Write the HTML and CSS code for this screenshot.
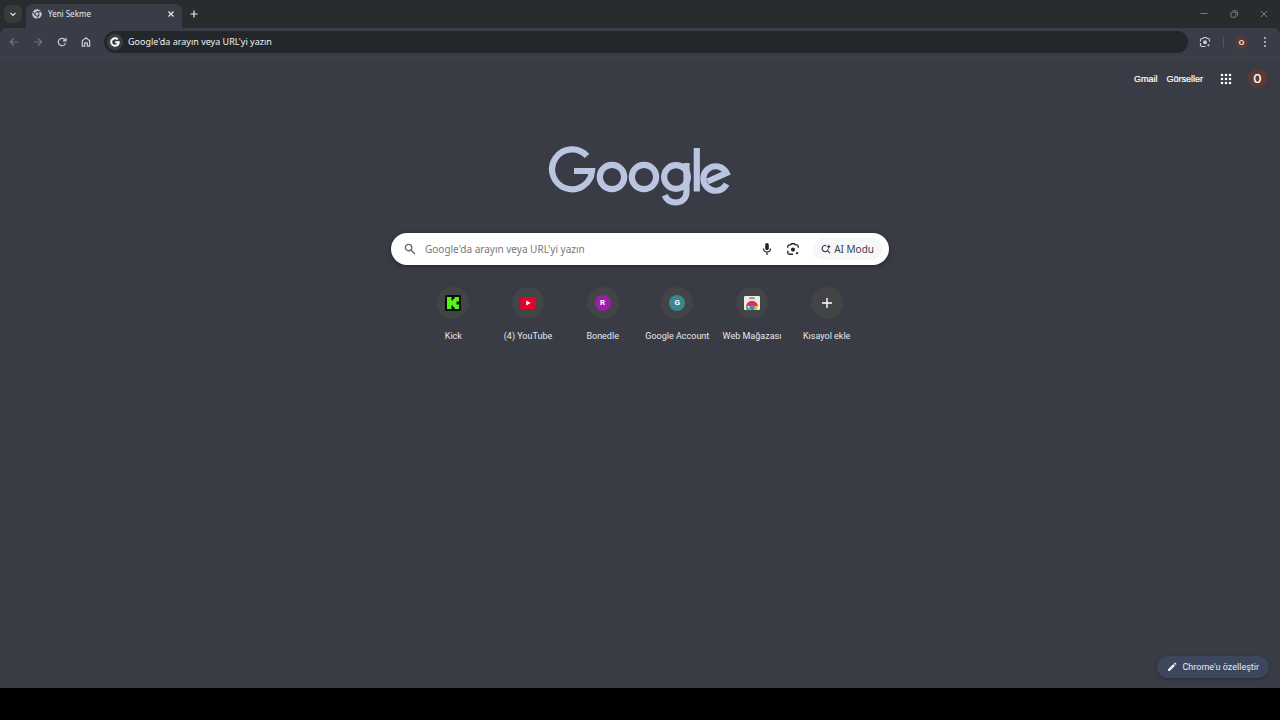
FILE: index.html
```html
<!DOCTYPE html>
<html lang="tr">
<head>
<meta charset="utf-8">
<title>Yeni Sekme</title>
<link rel="stylesheet" href="styles.css">
</head>
<body>
<header class="tabstrip">
  <button class="tab-search" aria-label="Sekmelerde ara"><svg width="8" height="8" viewBox="0 0 8 8"><path class="line" d="M1.5 2.8 4 5.3 6.5 2.8"/></svg></button>
  <div class="tab">
    <svg width="10" height="10" viewBox="0 0 20 20"><circle cx="10" cy="10" r="9.5" fill="#c5cad8"/><circle cx="10" cy="10" r="4.2" fill="#c5cad8" stroke="#3a3d47" stroke-width="2"/><path d="M10 5.3h8.5M6 12.5 1.8 5.2M14 12.5 9.8 19.5" stroke="#3a3d47" stroke-width="2"/></svg>
    <span class="tab-title">Yeni Sekme</span>
    <button class="plain" aria-label="Sekmeyi kapat"><svg width="8" height="8" viewBox="0 0 8 8"><path class="line" d="m1.5 1.5 5 5m0-5-5 5"/></svg></button>
  </div>
  <button class="plain new-tab" aria-label="Yeni sekme"><svg width="10" height="10" viewBox="0 0 10 10"><path class="line" d="M5 1.5v7M1.5 5h7"/></svg></button>
  <div class="window-controls">
    <button class="plain" aria-label="Küçült"><svg width="10" height="10" viewBox="0 0 10 10"><path class="thin" d="M1.5 4.5h7"/></svg></button>
    <button class="plain" aria-label="Geri yükle"><svg width="10" height="10" viewBox="0 0 10 10"><rect class="thin" x="2" y="3.2" width="5" height="5" rx="1"/><path class="thin" d="M3.7 1.7h3.2q1.6 0 1.6 1.6v3.2"/></svg></button>
    <button class="plain" aria-label="Kapat"><svg width="10" height="10" viewBox="0 0 10 10"><path class="thin" d="m2 2 6 6m0-6-6 6"/></svg></button>
  </div>
</header>
<nav class="toolbar" aria-label="Araç çubuğu">
  <button class="plain nav dim" aria-label="Geri"><svg width="12" height="12" viewBox="0 0 12 12"><path class="line" d="M10 6H2.5m3.3-3.5L2.3 6l3.5 3.5"/></svg></button>
  <button class="plain nav dim" aria-label="İleri"><svg width="12" height="12" viewBox="0 0 12 12"><path class="line" d="M2 6h7.5M6.2 2.5 9.7 6 6.2 9.5"/></svg></button>
  <button class="plain nav" aria-label="Yenile"><svg width="12" height="12" viewBox="0 0 12 12"><path class="line" d="M9.5 7.2A3.7 3.7 0 1 1 8.8 3.6L10 4.8M10 1.8v3.1H7"/></svg></button>
  <button class="plain nav" aria-label="Ana sayfa"><svg width="12" height="12" viewBox="0 0 12 12"><path class="line" d="M2.3 10.2V4.8L6 1.7l3.7 3.1v5.4H7.3V6.9H4.7v3.3z"/></svg></button>
  <label class="omnibox">
    <span class="g-badge"><svg width="10" height="10" viewBox="0 0 20 20"><path d="M15.5 4.7A7.6 7.6 0 1 0 17.6 10.6H10.5" fill="none" stroke="#fff" stroke-width="3.8"/></svg></span>
    <input type="text" aria-label="Adres ve arama çubuğu" placeholder="Google'da arayın veya URL'yi yazın">
  </label>
  <button class="plain lens-small" aria-label="Google Lens"><svg width="12" height="12" viewBox="0 0 24 24"><path class="lens" d="M3 11V8q0-3 3-3h2l1.500-2h5L16 5h2q3 0 3 3v3M3 14v4q0 3 3 3h7"/><circle cx="12" cy="12.500" r="3.800" fill="currentColor"/><circle cx="19" cy="18.500" r="2.200" fill="currentColor"/></svg></button>
  <span class="divider"></span>
  <button class="avatar small" aria-label="Profil">O</button>
  <button class="plain more" aria-label="Menü"><svg width="10" height="12" viewBox="0 0 10 12" fill="currentColor"><circle cx="5" cy="2" r="1"/><circle cx="5" cy="6" r="1"/><circle cx="5" cy="10" r="1"/></svg></button>
</nav>
<main class="page">
  <div class="account">
    <a href="#">Gmail</a>
    <a href="#">Görseller</a>
    <button class="plain apps" aria-label="Google uygulamaları"><svg width="12" height="12" viewBox="0 0 12 12" fill="currentColor"><circle cx="2" cy="2" r="1.300"/><circle cx="6" cy="2" r="1.300"/><circle cx="10" cy="2" r="1.300"/><circle cx="2" cy="6" r="1.300"/><circle cx="6" cy="6" r="1.300"/><circle cx="10" cy="6" r="1.300"/><circle cx="2" cy="10" r="1.300"/><circle cx="6" cy="10" r="1.300"/><circle cx="10" cy="10" r="1.300"/></svg></button>
    <button class="avatar" aria-label="Google Hesabı">O</button>
  </div>
  <svg class="logo" role="img" aria-label="Google" width="184" height="62" viewBox="0 0 184 62" fill="none" stroke="#bac5e2" stroke-width="6.2"><path d="M39 10A20 20 0 1 0 44 25H26"/><circle cx="64" cy="31" r="12.2"/><circle cx="96" cy="31" r="12.2"/><circle cx="128" cy="31" r="11.9"/><path d="M138.500 17v28.500c0 7-4.600 11-10.900 11-5.200 0-9-2.600-10.900-7.200"/><path d="M148.800 2v43.500"/><path d="M159.500 35.500 178.500 27A12.200 12.200 0 1 0 178.500 38"/></svg>
  <form class="search">
    <svg width="12" height="12" viewBox="0 0 12 12" class="glass"><circle cx="4.6" cy="4.6" r="3.2"/><path d="m7 7 3.9 3.9"/></svg>
    <input type="text" aria-label="Arama" placeholder="Google'da arayın veya URL'yi yazın">
    <button type="button" class="plain mic" aria-label="Sesle arama"><svg width="14" height="14" viewBox="0 0 14 14"><rect x="5.2" y="1" width="3.600" height="7.200" rx="1.800" fill="currentColor"/><path class="line" d="M3.500 6.500q0 3.500 3.500 3.500t3.500-3.500M7 10v3"/></svg></button>
    <button type="button" class="plain lens-big" aria-label="Görselle arama"><svg width="14" height="14" viewBox="0 0 24 24"><path class="lens" d="M3 10V8q0-3 3-3h2l1.500-2h5L16 5h2q3 0 3 3v2M3 15v3q0 3 3 3h6"/><circle cx="12" cy="13" r="3.500" fill="currentColor"/><circle cx="19" cy="19" r="2" fill="currentColor"/></svg></button>
    <button type="button" class="ai"><svg width="10" height="10" viewBox="0 0 10 10"><path class="line" d="M5.200 1.600A3.100 3.100 0 1 0 7.200 5.500M6.500 6.700 9 9.200"/><path d="M7.700.2 8.400 2l1.600.7-1.600.7-.7 1.800L7 3.400l-1.600-.7L7 2z" fill="currentColor"/></svg>AI Modu</button>
  </form>
  <div class="shortcuts">
    <a href="#"><span class="tile"><svg width="16" height="16" viewBox="0 0 16 16"><rect width="16" height="16" rx="1.500" fill="#071006"/><g fill="#54f51c"><rect x="2" y="2" width="4.500" height="12"/><rect x="6" y="5.500" width="3" height="5"/><rect x="8" y="4" width="3.500" height="8"/><rect x="9.500" y="2" width="4.500" height="4.500"/><rect x="9.500" y="9.500" width="4.500" height="4.500"/></g></svg></span>Kick</a>
    <a href="#"><span class="tile"><svg width="16" height="12" viewBox="0 0 16 12"><rect width="16" height="12" rx="2.500" fill="#e6002d"/><path fill="#fff" d="m6.200 3.500 4.500 2.500-4.500 2.500z"/></svg></span>(4) YouTube</a>
    <a href="#"><span class="tile"><span class="initial purple">R</span></span>Bonedle</a>
    <a href="#"><span class="tile"><span class="initial teal">G</span></span>Google Account</a>
    <a href="#"><span class="tile"><svg width="16" height="14" viewBox="0 0 16 14"><rect width="16" height="14" rx="1" fill="#e8e9ec"/><rect x="5" y="1.200" width="6" height="1.800" rx=".9" fill="#8a8c90"/><path fill="#d93543" d="M2.200 10a5.800 5.300 0 0 1 11.600 0z"/><path fill="#36a457" d="M2.200 9 6 14H3q-1.500-2-.8-5z"/><path fill="#f1bd32" d="M10 10h3.800q.2 2.500-.8 4H8z"/><circle cx="8" cy="11.500" r="2.600" fill="#4380dd"/></svg></span>Web Mağazası</a>
    <button type="button"><span class="tile"><svg width="12" height="12" viewBox="0 0 12 12"><path d="M6 1v10M1 6h10" stroke="#fff" stroke-width="1.400"/></svg></span>Kısayol ekle</button>
  </div>
  <button class="customize"><svg width="10" height="10" viewBox="0 0 10 10" fill="#e3ebfc"><path d="M1 9V7.200L6.300 1.900l1.800 1.800L2.800 9zM6.900 1.300l.6-.6q.4-.4.8 0l1 1q.4.400 0 .8l-.6.6z"/></svg>Chrome'u özelleştir</button>
</main>
<footer class="taskbar"></footer>
</body>
</html>
```
FILE: styles.css
```css
* { box-sizing: border-box; }

body {
  margin: 0;
  min-height: 100vh;
  display: flex;
  flex-direction: column;
  background: #292c2f;
  color: #e6e8ee;
  font: 9px/12px "Noto Sans", "Open Sans", sans-serif;
}

button, input { font: inherit; color: inherit; }
button { border: 0; padding: 0; background: none; }
a { color: inherit; text-decoration: none; }
svg { display: block; flex: none; }
input { min-width: 0; height: 16px; border: 0; padding: 0; background: none; outline: 0; line-height: 16px; }

.plain { display: flex; align-items: center; justify-content: center; }
.line { fill: none; stroke: currentColor; stroke-width: 1.2; }
.thin { fill: none; stroke: currentColor; stroke-width: 0.8; }
.lens { fill: none; stroke: currentColor; stroke-width: 2.4; }

.tabstrip { display: flex; align-items: center; height: 28px; padding: 0 8px 0 4px; }
.tab-search {
  display: flex;
  align-items: center;
  justify-content: center;
  width: 18px;
  height: 18px;
  border-radius: 6px;
  background: #393a3c;
}
.tab {
  display: flex;
  align-items: center;
  align-self: flex-end;
  gap: 6px;
  width: 156px;
  height: 24px;
  margin-left: 4px;
  padding: 0 7px 4px 6px;
  border-radius: 7px 7px 0 0;
  background: #3a3d47;
}
.tab-title { flex: 1; font-size: 8px; }
.new-tab { margin-left: 7px; }
.window-controls { display: flex; gap: 20px; margin-left: auto; padding-right: 3px; color: #8b8e92; }

.toolbar {
  display: flex;
  align-items: center;
  height: 30px;
  padding: 0 10px 1px 8px;
  border-bottom: 1px solid #42454d;
  border-radius: 7px 7px 0 0;
  background: #3a3d47;
  color: #c9ccd4;
}
.nav { width: 12px; margin-right: 12px; }
.dim { color: #70737c; }
.omnibox {
  display: flex;
  flex: 1;
  align-items: center;
  gap: 5px;
  height: 22px;
  padding: 0 3px;
  border-radius: 11px;
  background: #23272b;
}
.g-badge {
  display: grid;
  place-items: center;
  width: 16px;
  height: 16px;
  border-radius: 50%;
  background: #3b3e43;
}
.omnibox input { flex: 1; }
.omnibox input::placeholder { color: #f0f2f6; opacity: 1; }
.lens-small { margin: 0 12px 0 11px; }
.divider { width: 1px; height: 10px; background: #565963; }
.more { width: 10px; }

.avatar {
  width: 19px;
  height: 19px;
  border-radius: 50%;
  background: #5a3a35;
  color: #fff;
  font-family: Roboto, sans-serif;
  font-size: 12px;
  font-weight: 500;
  line-height: 20px;
}
.avatar.small { width: 13px; height: 13px; margin: 0 12px 0 11px; font-size: 8px; line-height: 13px; }

.page {
  flex: 1;
  display: flex;
  flex-direction: column;
  align-items: center;
  padding: 11px 11px 10px;
  background: #393c44;
}
.account {
  display: flex;
  align-items: center;
  align-self: flex-end;
  padding-right: 2px;
  color: #fff;
  font-family: "Liberation Sans", Arial, sans-serif;
}
.account a { margin-right: 9px; -webkit-text-stroke: 0.2px #fff; }
.apps { margin: 0 16px 0 8px; }

.logo { margin-top: 58px; }

.search {
  display: flex;
  align-items: center;
  width: 498px;
  max-width: 100%;
  height: 32px;
  margin-top: 25px;
  padding: 0 7px 0 13px;
  border-radius: 16px;
  background: #fff;
  box-shadow: 0 1px 4px #24262b;
  color: #25272a;
  font-size: 10px;
}
.glass { fill: none; stroke: #65686c; stroke-width: 1.4; }
.search input { flex: 1; margin-left: 9px; }
.search input::placeholder { color: #75777b; opacity: 1; }
.mic { margin-right: 12px; }
.lens-big { margin-right: 13px; }
.ai {
  display: flex;
  align-items: center;
  gap: 3px;
  height: 22px;
  padding: 0 8px;
  border-radius: 11px;
  background: #f6f7f8;
  color: #3e4145;
}

.shortcuts {
  display: grid;
  grid-template-columns: repeat(6, 1fr);
  width: 448px;
  max-width: 100%;
  margin-top: 22px;
  font-family: Roboto, sans-serif;
}
.shortcuts > * {
  display: flex;
  flex-direction: column;
  align-items: center;
  gap: 11px;
  white-space: nowrap;
}
.tile {
  display: grid;
  place-items: center;
  width: 32px;
  height: 32px;
  border-radius: 50%;
  background: #434446;
}
.initial {
  width: 16px;
  height: 16px;
  border-radius: 50%;
  color: #fff;
  font-size: 8px;
  font-weight: 700;
  line-height: 16px;
  text-align: center;
}
.purple { background: #9c1fa8; }
.teal { background: #3c8592; }

.customize {
  display: flex;
  align-items: center;
  align-self: flex-end;
  gap: 6px;
  height: 22px;
  margin-top: auto;
  padding: 0 10px;
  border-radius: 11px;
  background: #3c475d;
  box-shadow: 0 1px 3px #292c34;
  color: #e3ebfc;
  font-family: Roboto, sans-serif;
}
.taskbar { height: 32px; background: #000; }
```
